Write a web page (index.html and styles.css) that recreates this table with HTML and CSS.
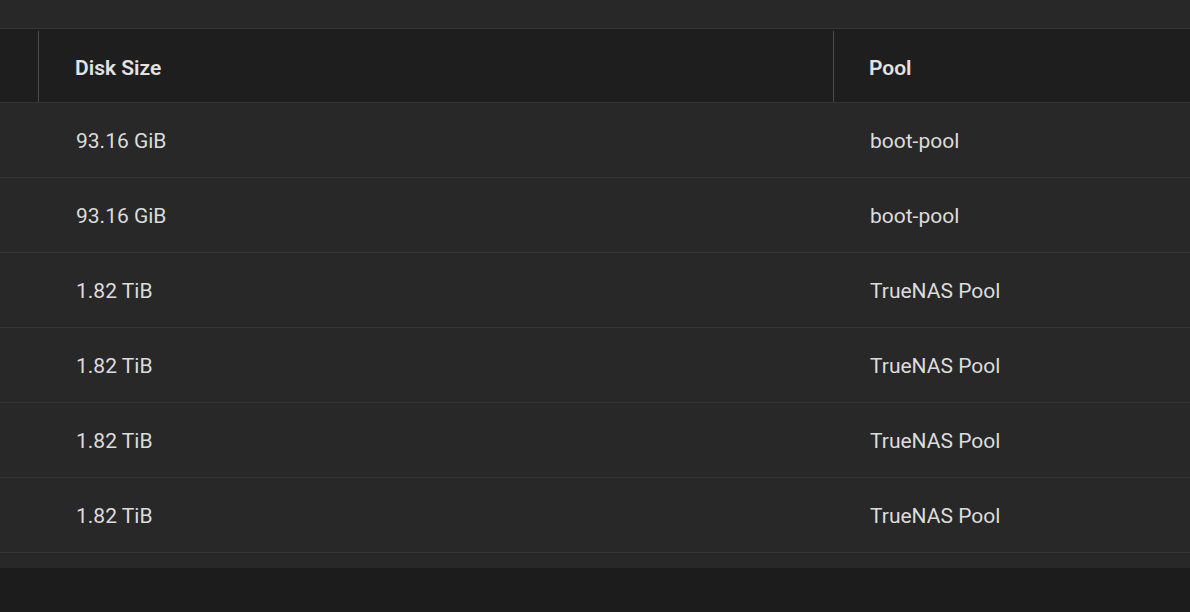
FILE: index.html
```html
<!DOCTYPE html>
<html>
<head>
<meta charset="utf-8">
<link rel="stylesheet" href="styles.css">
</head>
<body>
<div class="page">
  <div class="topbar"></div>
  <div class="table">
    <div class="row head">
      <div class="cell lead"></div>
      <div class="cell sep">Disk Size</div>
      <div class="cell sep">Pool</div>
    </div>
    <div class="row"><div class="cell lead"></div><div class="cell">93.16 GiB</div><div class="cell">boot-pool</div></div>
    <div class="row"><div class="cell lead"></div><div class="cell">93.16 GiB</div><div class="cell">boot-pool</div></div>
    <div class="row"><div class="cell lead"></div><div class="cell">1.82 TiB</div><div class="cell">TrueNAS Pool</div></div>
    <div class="row"><div class="cell lead"></div><div class="cell">1.82 TiB</div><div class="cell">TrueNAS Pool</div></div>
    <div class="row"><div class="cell lead"></div><div class="cell">1.82 TiB</div><div class="cell">TrueNAS Pool</div></div>
    <div class="row"><div class="cell lead"></div><div class="cell">1.82 TiB</div><div class="cell">TrueNAS Pool</div></div>
    <div class="foot"></div>
  </div>
</div>
</body>
</html>
```
FILE: styles.css
```css
html, body {
  margin: 0;
  padding: 0;
  background: #1c1c1c;
  font-family: Roboto, "Liberation Sans", sans-serif;
}
.page {
  width: 1190px;
  height: 612px;
  background: #1c1c1c;
  overflow: hidden;
}
.topbar {
  height: 28px;
  background: #282828;
  border-bottom: 1px solid #353535;
}
.table {
  background: #282828;
}
.row {
  display: grid;
  grid-template-columns: 39px 794px 1fr;
  height: 74px;
  border-top: 1px solid #333333;
  align-items: center;
  color: #dcdcdc;
  font-size: 21px;
}
.row .cell {
  padding-left: 37px;
  padding-top: 2px;
}
.row .lead {
  padding: 0;
}
.row.head {
  height: 73px;
  border-top: none;
  background: #1e1e1e;
  font-weight: 600;
  color: #e2e2e2;
  align-items: stretch;
}
.head .cell {
  display: flex;
  align-items: center;
  padding-top: 0;
}
.head .sep {
  border-left: 1px solid #4a4a4a;
  margin-top: 2px;
  padding-top: 2px;
  padding-left: 35px;
}
.head .cell:nth-child(2) {
  margin-left: -1px;
  padding-left: 36px;
}
.foot {
  height: 15px;
  border-top: 1px solid #333333;
}
```
